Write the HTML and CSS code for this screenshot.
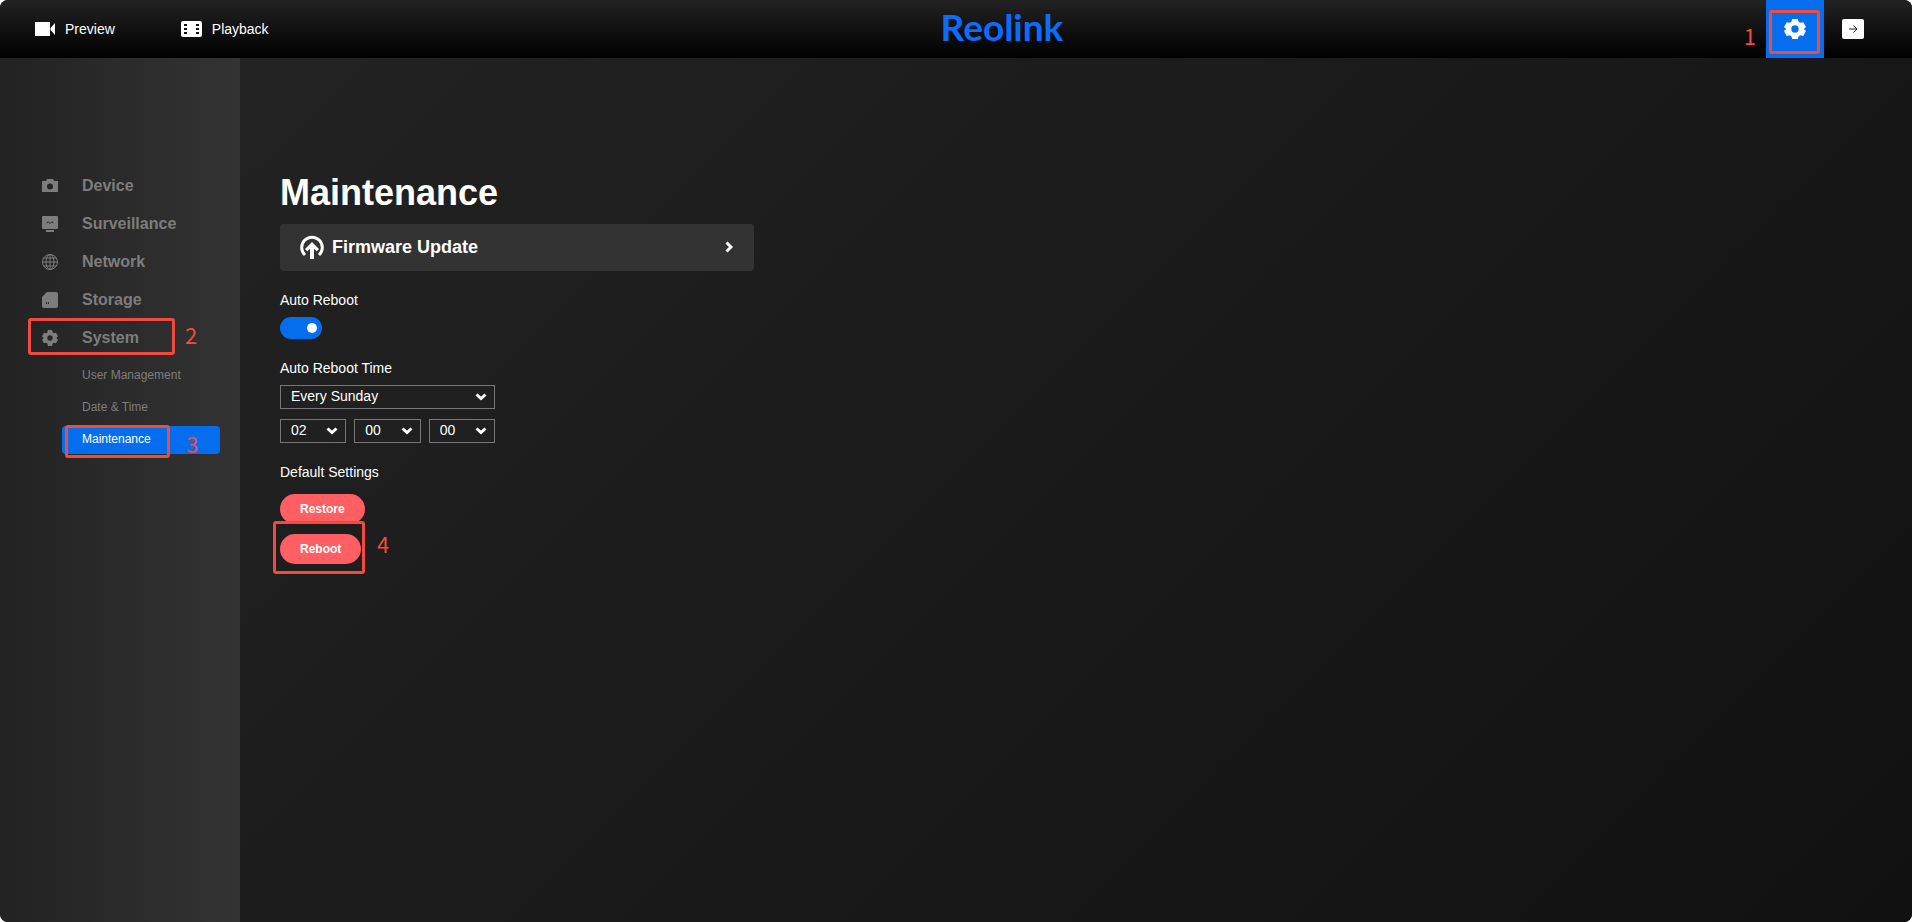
FILE: index.html
```html
<!DOCTYPE html>
<html lang="en">
<head>
  <meta charset="utf-8">
  <title>Reolink</title>
  <link rel="stylesheet" href="styles.css">
</head>
<body>
  <div class="app">
    <header class="topbar">
      <nav class="top-nav">
        <a href="#preview">
          <svg width="21" height="14" viewBox="0 0 21 14"><path d="M1 0h15v14H1zM16.500 6L21 1v12l-4.500-5z"/></svg>
          Preview
        </a>
        <a href="#playback">
          <svg width="21" height="16" viewBox="0 0 21 16"><rect width="21" height="16" rx="2"/><path class="cut" d="M3 3h3v2H3zM3 7h3v2H3zM3 11h3v2H3zM15 3h3v2h-3zM15 7h3v2h-3zM15 11h3v2h-3z"/></svg>
          Playback
        </a>
      </nav>
      <a class="logo" href="#home">Reolink</a>
      <div class="top-actions">
        <button class="settings" type="button" aria-label="Settings">
          <svg width="22" height="22" viewBox="0 0 24 24"><path fill-rule="evenodd" d="M9 1h6l1 3.200 1.800 1L21 4.500l3 5.200L21.600 12 24 14.300l-3 5.200-3.200-.7-1.800 1L15 23H9l-1-3.200-1.800-1-3.200.7-3-5.200L2.400 12 0 9.700l3-5.200 3.200.7L8 4.200zM12 8a4 4 0 1 0 0 8 4 4 0 0 0 0-8z"/></svg>
          <span class="mark mark-1"><span>1</span></span>
        </button>
        <button type="button" aria-label="Log out">
          <svg width="22" height="20" viewBox="0 0 22 20"><rect width="22" height="20" rx="2"/><path class="arrow" d="M7 10h8M11.500 6.500L15 10l-3.500 3.500"/></svg>
        </button>
      </div>
    </header>

    <div class="layout">
      <aside class="sidebar">
        <ul class="menu">
          <li><a href="#device">
            <svg width="16" height="16" viewBox="0 0 16 16"><path fill-rule="evenodd" d="M5 1h6l1 2h4v11H0V3h4zM8 5.500a3 3 0 1 0 0 6 3 3 0 0 0 0-6z"/></svg>
            Device
          </a></li>
          <li><a href="#surveillance">
            <svg width="16" height="16" viewBox="0 0 16 16"><rect width="16" height="13" rx="1"/><path d="M4 14h8v2H4z"/><path class="wave" d="M4.500 7l1.800-1.200L8 7.500l1.700-1.700L11.500 7"/></svg>
            Surveillance
          </a></li>
          <li><a href="#network">
            <svg class="line" width="16" height="16" viewBox="0 0 16 16"><circle cx="8" cy="8" r="7.500"/><ellipse cx="8" cy="8" rx="4" ry="7.500"/><path d="M8 .5v15M.5 8h15M2 4h12M2 12h12"/></svg>
            Network
          </a></li>
          <li><a href="#storage">
            <svg width="16" height="16" viewBox="0 0 16 16"><path d="M5 0h9a2 2 0 0 1 2 2v12a2 2 0 0 1-2 2H2a2 2 0 0 1-2-2V5z"/><path class="hole" d="M4 10h1v2H4zM6 10h1v2H6z"/></svg>
            Storage
          </a></li>
          <li><a href="#system">
            <svg width="16" height="16" viewBox="0 0 24 24"><path fill-rule="evenodd" d="M9 0h6l1 3.700 1.800 1L21 4l3 5.500L21.600 12 24 14.500 21 20l-3.200-.7-1.800 1L15 24H9l-1-3.700-1.800-1L3 20l-3-5.500L2.400 12 0 9.500 3 4l3.200.7L8 3.700zM12 8a4 4 0 1 0 0 8 4 4 0 0 0 0-8z"/></svg>
            System
            <span class="mark mark-2"><span>2</span></span>
          </a>
            <ul class="submenu">
              <li><a href="#users">User Management</a></li>
              <li><a href="#date">Date &amp; Time</a></li>
              <li><a class="active" href="#maintenance">Maintenance<span class="mark mark-3"><span>3</span></span></a></li>
            </ul>
          </li>
        </ul>
      </aside>

      <main class="content">
        <h1>Maintenance</h1>

        <a class="card" href="#firmware">
          <svg width="24" height="24" viewBox="0 0 24 24"><path class="ring" d="M5 20A10.300 10.300 0 1 1 19 20"/><path d="M12 7l7 7-2.200 2.200L14 13.700V24h-4V13.700l-2.800 2.500L5 14z"/></svg>
          <span>Firmware Update</span>
          <svg class="chevron" width="8" height="12" viewBox="0 0 8 12"><path d="M1.500 1.500L6 6l-4.500 4.500"/></svg>
        </a>

        <div class="field">
          <label for="autoReboot">Auto Reboot</label>
          <input class="toggle" type="checkbox" id="autoReboot" checked>
        </div>

        <div class="field">
          <label for="rebootDay">Auto Reboot Time</label>
          <div class="time">
            <div class="select day">
              <select id="rebootDay"><option>Every Sunday</option></select>
              <svg class="chevron" width="12" height="8" viewBox="0 0 12 8"><path d="M1.500 1.500L6 5.500l4.500-4"/></svg>
            </div>
            <div class="select">
              <select aria-label="Hour"><option>02</option></select>
              <svg class="chevron" width="12" height="8" viewBox="0 0 12 8"><path d="M1.500 1.500L6 5.500l4.500-4"/></svg>
            </div>
            <div class="select">
              <select aria-label="Minute"><option>00</option></select>
              <svg class="chevron" width="12" height="8" viewBox="0 0 12 8"><path d="M1.500 1.500L6 5.500l4.500-4"/></svg>
            </div>
            <div class="select">
              <select aria-label="Second"><option>00</option></select>
              <svg class="chevron" width="12" height="8" viewBox="0 0 12 8"><path d="M1.500 1.500L6 5.500l4.500-4"/></svg>
            </div>
          </div>
        </div>

        <div class="defaults">
          <p>Default Settings</p>
          <button class="danger" type="button">Restore</button>
          <button class="danger" type="button">Reboot<span class="mark mark-4"><span>4</span></span></button>
        </div>
      </main>
    </div>
  </div>
</body>
</html>
```

FILE: styles.css
```css
* {
  box-sizing: border-box;
}

body {
  margin: 0;
  background: #fff;
  font-family: "Liberation Sans", Arial, sans-serif;
  font-size: 14px;
  line-height: 20px;
  color: #fff;
}

a {
  color: inherit;
  text-decoration: none;
}

button {
  padding: 0;
  border: none;
  background: none;
  color: inherit;
  font-family: inherit;
  cursor: pointer;
}

svg {
  flex: none;
  fill: currentColor;
}

ul {
  margin: 0;
  padding: 0;
  list-style: none;
}

.app {
  display: flex;
  flex-direction: column;
  min-height: 100vh;
  border-radius: 8px;
  overflow: hidden;
  background: #111;
}

/* Top bar */
.topbar {
  display: grid;
  grid-template-columns: 1fr auto 1fr;
  align-items: center;
  height: 58px;
  padding: 0 30px 0 34px;
  background: linear-gradient(#222, #000);
}

.top-nav {
  display: flex;
  gap: 66px;
}

.top-nav a {
  display: flex;
  align-items: center;
  gap: 10px;
}

.cut {
  fill: #111;
}

.logo {
  margin-left: 88px;
  padding-bottom: 4px;
  font-family: Lato, sans-serif;
  font-size: 37px;
  font-weight: bold;
  line-height: 54px;
  color: #0c6cff;
}

.top-actions {
  display: flex;
  justify-content: flex-end;
}

.top-actions button {
  display: flex;
  align-items: center;
  justify-content: center;
  width: 58px;
  height: 58px;
}

.top-actions .settings {
  position: relative;
  background: #046eef;
}

.arrow {
  fill: none;
  stroke: #222;
}

/* Sidebar */
.layout {
  display: flex;
  flex: 1;
}

.sidebar {
  width: 240px;
  padding-top: 109px;
  background: linear-gradient(90deg, #222, #333);
  color: #7d7d7d;
}

.menu > li > a {
  position: relative;
  display: flex;
  align-items: center;
  gap: 24px;
  height: 38px;
  padding-left: 42px;
  font-size: 16px;
  font-weight: bold;
}

.wave {
  fill: none;
  stroke: #292929;
}

.hole {
  fill: #292929;
}

.line {
  fill: none;
  stroke: currentColor;
}

.submenu {
  display: grid;
  gap: 4px;
  padding: 5px 20px 0 62px;
  font-size: 12px;
}

.submenu a {
  position: relative;
  display: block;
  padding: 0 0 2px 20px;
  border-radius: 4px;
  line-height: 26px;
}

.submenu .active {
  background: #046eef;
  color: #fff;
}

/* Page */
.content {
  flex: 1;
  padding: 115px 40px 40px;
  background: linear-gradient(135deg, #222, #111);
}

h1 {
  margin: 0 0 11px;
  font-size: 36px;
  line-height: 40px;
}

.card {
  display: flex;
  align-items: center;
  gap: 8px;
  max-width: 474px;
  height: 47px;
  margin-bottom: 19px;
  padding: 0 21px 2px 20px;
  border-radius: 4px;
  background: #333;
  font-size: 18px;
  font-weight: bold;
}

.card .chevron {
  margin-left: auto;
}

.ring {
  fill: none;
  stroke: currentColor;
  stroke-width: 3;
}

.chevron {
  fill: none;
  stroke: currentColor;
  stroke-width: 3;
}

.field {
  margin-bottom: 19px;
}

.field label {
  display: block;
  margin-bottom: 7px;
}

.toggle {
  appearance: none;
  display: flex;
  align-items: center;
  width: 42px;
  height: 22px;
  margin: 0;
  padding: 0 5px;
  border-radius: 11px;
  background: #555;
}

.toggle::before {
  content: "";
  width: 10px;
  height: 10px;
  border-radius: 50%;
  background: #fff;
}

.toggle:checked {
  justify-content: flex-end;
  background: #046eef;
}

.time {
  display: grid;
  grid-template-columns: repeat(3, 1fr);
  gap: 10px 8px;
  max-width: 215px;
}

.day {
  grid-column: 1 / -1;
}

.select {
  position: relative;
}

.select select {
  appearance: none;
  display: block;
  width: 100%;
  height: 24px;
  padding: 0 10px 2px;
  border: 1px solid #777;
  border-radius: 0;
  background: #202020;
  color: inherit;
  font-family: inherit;
  font-size: 14px;
}

.select .chevron {
  position: absolute;
  top: 8px;
  right: 8px;
  pointer-events: none;
}

.defaults {
  display: flex;
  flex-direction: column;
  align-items: flex-start;
  gap: 10px;
}

.defaults p {
  margin: 0 0 2px;
}

.danger {
  position: relative;
  height: 30px;
  padding: 0 20px;
  border-radius: 15px;
  background: #ff5f62;
  font-size: 12px;
  font-weight: bold;
}

/* Numbered step outlines */
.mark {
  position: absolute;
  border: 3px solid #f04b3e;
  border-radius: 3px;
  color: #f04b3e;
  font-family: "Noto Sans CJK SC", sans-serif;
  font-size: 22px;
  font-weight: normal;
  line-height: 24px;
}

.mark span {
  position: absolute;
}

.mark-1 {
  inset: 10px 4px 4px 3px;
}

.mark-1 span {
  top: 10px;
  right: 61px;
}

.mark-2 {
  inset: -1px 65px 2px 28px;
}

.mark-2 span {
  top: 1px;
  left: 154px;
}

.mark-3 {
  inset: -1px 50px -4px 3px;
}

.mark-3 span {
  top: 3px;
  left: 118px;
}

.mark-4 {
  inset: -13px -4px -10px -7px;
}

.mark-4 span {
  top: 7px;
  left: 101px;
}
```
